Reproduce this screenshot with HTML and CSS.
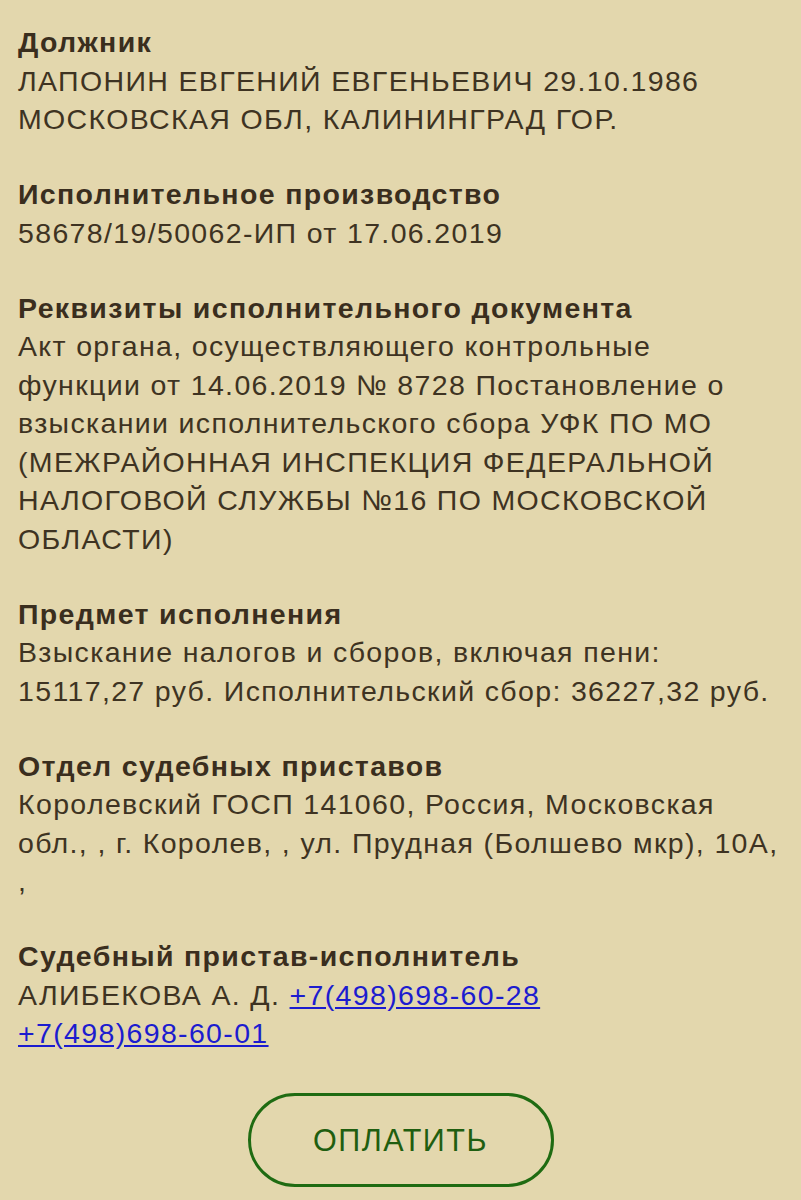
FILE: index.html
```html
<!DOCTYPE html>
<html lang="ru">
<head>
<meta charset="utf-8">
<link rel="stylesheet" href="styles.css">
</head>
<body>
<div class="page">
  <section class="item">
    <div class="label">Должник</div>
    <div class="value">ЛАПОНИН ЕВГЕНИЙ ЕВГЕНЬЕВИЧ 29.10.1986 МОСКОВСКАЯ ОБЛ, КАЛИНИНГРАД ГОР.</div>
  </section>
  <section class="item">
    <div class="label">Исполнительное производство</div>
    <div class="value">58678/19/50062-ИП от 17.06.2019</div>
  </section>
  <section class="item">
    <div class="label">Реквизиты исполнительного документа</div>
    <div class="value">Акт органа, осуществляющего контрольные функции от 14.06.2019 № 8728 Постановление о взыскании исполнительского сбора УФК ПО МО (МЕЖРАЙОННАЯ ИНСПЕКЦИЯ ФЕДЕРАЛЬНОЙ НАЛОГОВОЙ СЛУЖБЫ №16 ПО МОСКОВСКОЙ ОБЛАСТИ)</div>
  </section>
  <section class="item">
    <div class="label">Предмет исполнения</div>
    <div class="value">Взыскание налогов и сборов, включая пени: 15117,27 руб. Исполнительский сбор: 36227,32 руб.</div>
  </section>
  <section class="item">
    <div class="label">Отдел судебных приставов</div>
    <div class="value">Королевский ГОСП 141060, Россия, Московская обл., , г. Королев, , ул. Прудная (Болшево мкр), 10А, ,</div>
  </section>
  <section class="item">
    <div class="label">Судебный пристав-исполнитель</div>
    <div class="value">АЛИБЕКОВА А. Д. <a class="phone" href="#">+7(498)698-60-28</a> <a class="phone" href="#">+7(498)698-60-01</a></div>
  </section>
  <div class="actions">
    <button class="pay">ОПЛАТИТЬ</button>
  </div>
</div>
</body>
</html>
```

FILE: styles.css
```css
html, body {
  margin: 0;
  padding: 0;
  background: #e3d7ad;
}
.page {
  padding: 23px 18px 0 18px;
  font-family: "Liberation Sans", Arial, sans-serif;
  font-size: 28.5px;
  letter-spacing: 1.35px;
  line-height: 38.5px;
  color: #3e3322;
}
.item {
  margin-bottom: 36.5px;
}
.label {
  font-weight: bold;
  color: #3a2e1e;
}
.value {
  color: #3e3322;
}
.phone {
  color: #1c1ccf;
  text-decoration: underline;
  white-space: nowrap;
}
.actions {
  display: flex;
  justify-content: center;
  padding-top: 4px;
}
.pay {
  width: 306px;
  height: 94px;
  border: 3px solid #1f6b12;
  border-radius: 47px;
  background: transparent;
  color: #1f5e10;
  font-family: "Liberation Sans", Arial, sans-serif;
  font-size: 30.5px;
  letter-spacing: 1.5px;
  padding: 0;
}
```
